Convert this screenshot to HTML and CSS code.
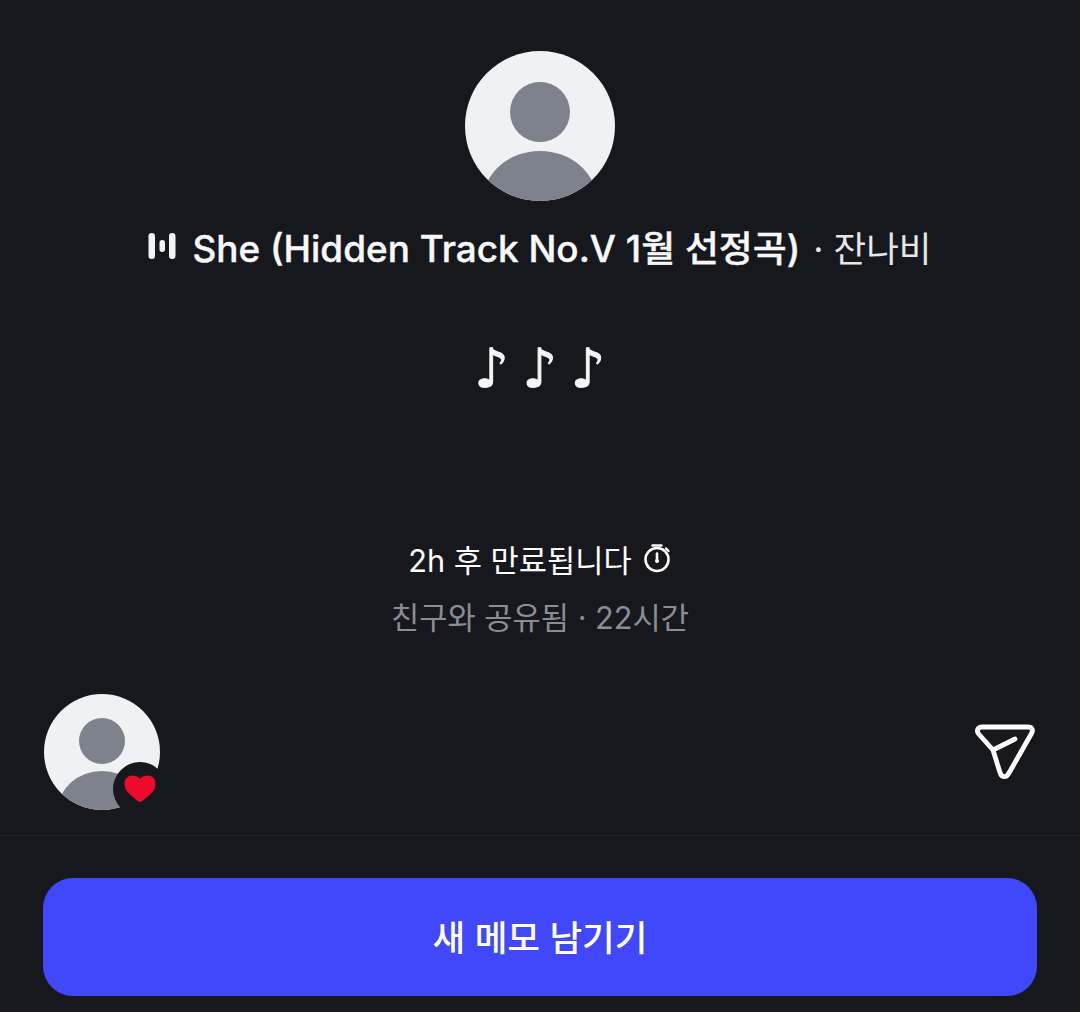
FILE: index.html
```html
<!DOCTYPE html>
<html lang="ko">
<head>
<meta charset="utf-8">
<title>메모</title>
<link rel="stylesheet" href="styles.css">
</head>
<body>
<main class="sheet">
  <section class="note">
    <svg class="avatar-large" viewBox="0 0 150 150" aria-hidden="true">
      <defs><clipPath id="large-clip"><circle cx="75" cy="75" r="75"/></clipPath></defs>
      <circle cx="75" cy="75" r="75" fill="#eff1f5"/>
      <g clip-path="url(#large-clip)" fill="#7d828c">
        <circle cx="75" cy="61" r="30"/>
        <ellipse cx="75" cy="150" rx="57" ry="50"/>
      </g>
    </svg>
    <div class="track">
      <svg class="bars" viewBox="0 0 28 28" aria-hidden="true">
        <rect x="0.5" y="1" width="6.5" height="26" rx="3.2"/>
        <rect x="11.5" y="8" width="5.5" height="12" rx="2.7"/>
        <rect x="21" y="1" width="6.5" height="26" rx="3.2"/>
      </svg>
      <span class="track-name">She (Hidden Track No.V 1월 선정곡)</span>
      <span class="track-artist">· 잔나비</span>
    </div>
    <p class="message">♪ ♪ ♪</p>
    <div class="expiry">
      <span>2h 후 만료됩니다</span>
      <svg class="timer" viewBox="0 0 30 30" aria-hidden="true">
        <circle cx="15" cy="16.5" r="11.5" fill="none" stroke="#fff" stroke-width="2.6"/>
        <path d="M10.5 2.5h9M24 5.5l2.5 2.5" fill="none" stroke="#fff" stroke-width="2.4" stroke-linecap="round"/>
        <path d="M15 10.5v7" fill="none" stroke="#fff" stroke-width="2.6" stroke-linecap="round"/>
        <circle cx="15" cy="18" r="2" fill="#fff"/>
      </svg>
    </div>
    <p class="shared">친구와 공유됨 · 22시간</p>
  </section>
  <section class="actions">
    <div class="liker">
      <svg class="avatar-small" viewBox="0 0 116 116" aria-hidden="true">
        <defs><clipPath id="small-clip"><circle cx="58" cy="58" r="58"/></clipPath></defs>
        <circle cx="58" cy="58" r="58" fill="#eff1f5"/>
        <g clip-path="url(#small-clip)" fill="#7d828c">
          <circle cx="58" cy="47" r="23"/>
          <ellipse cx="58" cy="116" rx="44" ry="39"/>
        </g>
      </svg>
      <span class="badge">
        <svg class="heart" viewBox="0 0 32 28" aria-hidden="true">
          <path d="M16 27C14.5 27 13 25.5 10 23 5 19 .5 15 .5 8.500.5 3.500 4 .5 8.500.5c3 0 5.800 1.300 7.500 3.500C17.700 1.800 20.500.5 23.500.5 28 .5 31.500 3.500 31.500 8.500 31.500 15 27 19 22 23 19 25.500 17.500 27 16 27z" fill="#ee0a2e"/>
        </svg>
      </span>
    </div>
    <svg class="send" viewBox="0 0 60 56" aria-hidden="true">
      <path d="M7 3H53C57 3 58.500 6 56.500 9.500L34 49C31 54.500 26.500 53.500 25 48.500L18 26 3.700 10C1 6.500 3 3 7 3Z" fill="none" stroke="#fff" stroke-width="4.8" stroke-linejoin="round"/>
      <path d="M18 26L40 15" fill="none" stroke="#fff" stroke-width="4.800" stroke-linecap="round"/>
    </svg>
  </section>
  <footer class="footer">
    <button class="cta" type="button">새 메모 남기기</button>
  </footer>
</main>
</body>
</html>
```
FILE: styles.css
```css
* { box-sizing: border-box; }
html, body { margin: 0; height: 100%; }
body {
  background: #17181d;
  color: #fff;
  font-family: Inter, "Noto Sans CJK KR", sans-serif;
}
.sheet {
  display: flex;
  flex-direction: column;
  height: 1012px;
  overflow: hidden;
}
.note {
  display: flex;
  flex-direction: column;
  align-items: center;
  padding-top: 51px;
}
.avatar-large { display: block; width: 150px; height: 150px; }
.track {
  display: flex;
  align-items: center;
  margin-top: 21px;
  height: 48px;
  font-size: 35.5px;
  white-space: nowrap;
}
.bars { width: 28px; height: 28px; fill: #f2f3f6; margin-right: 16px; }
.track-name { font-size: 36.9px; font-weight: 550; color: #f6f7f9; -webkit-text-stroke: 0.4px #f6f7f9; }
.track-artist { margin-left: 13px; font-weight: 400; color: #e4e6ea; }
.message {
  margin: 74px 0 0;
  height: 50px;
  font-family: "DejaVu Sans", sans-serif;
  font-size: 54px;
  font-weight: 700;
  word-spacing: -5px;
  line-height: 50px;
  color: #f4f5f7;
  -webkit-text-stroke: 1px #f4f5f7;
}
.expiry {
  display: flex;
  align-items: center;
  gap: 10px;
  margin-top: 142px;
  height: 44px;
  font-size: 30.7px;
  color: #fff;
}
.timer { width: 30px; height: 30px; }
.shared {
  margin: 16px 0 0;
  height: 44px;
  line-height: 44px;
  font-size: 30.7px;
  color: #8a8d94;
}
.actions {
  display: flex;
  justify-content: space-between;
  align-items: flex-start;
  margin-top: 54px;
  padding: 0 45px 0 44px;
  height: 142px;
  border-bottom: 1px solid #24252b;
}
.liker { position: relative; width: 116px; height: 116px; }
.avatar-small { display: block; width: 116px; height: 116px; }
.badge {
  position: absolute;
  left: 69px;
  top: 68px;
  display: flex;
  align-items: center;
  justify-content: center;
  width: 54px;
  height: 54px;
  border-radius: 50%;
  background: #17181d;
}
.heart { width: 32px; height: 28px; }
.send { width: 60px; height: 56px; margin-top: 30px; }
.footer { padding: 42px 43px 0; }
.cta {
  display: block;
  width: 100%;
  height: 118px;
  padding: 0 0 4px;
  border: 0;
  border-radius: 30px;
  background: #4147fb;
  color: #fff;
  font: 500 35.5px Inter, "Noto Sans CJK KR", sans-serif;
}
```
